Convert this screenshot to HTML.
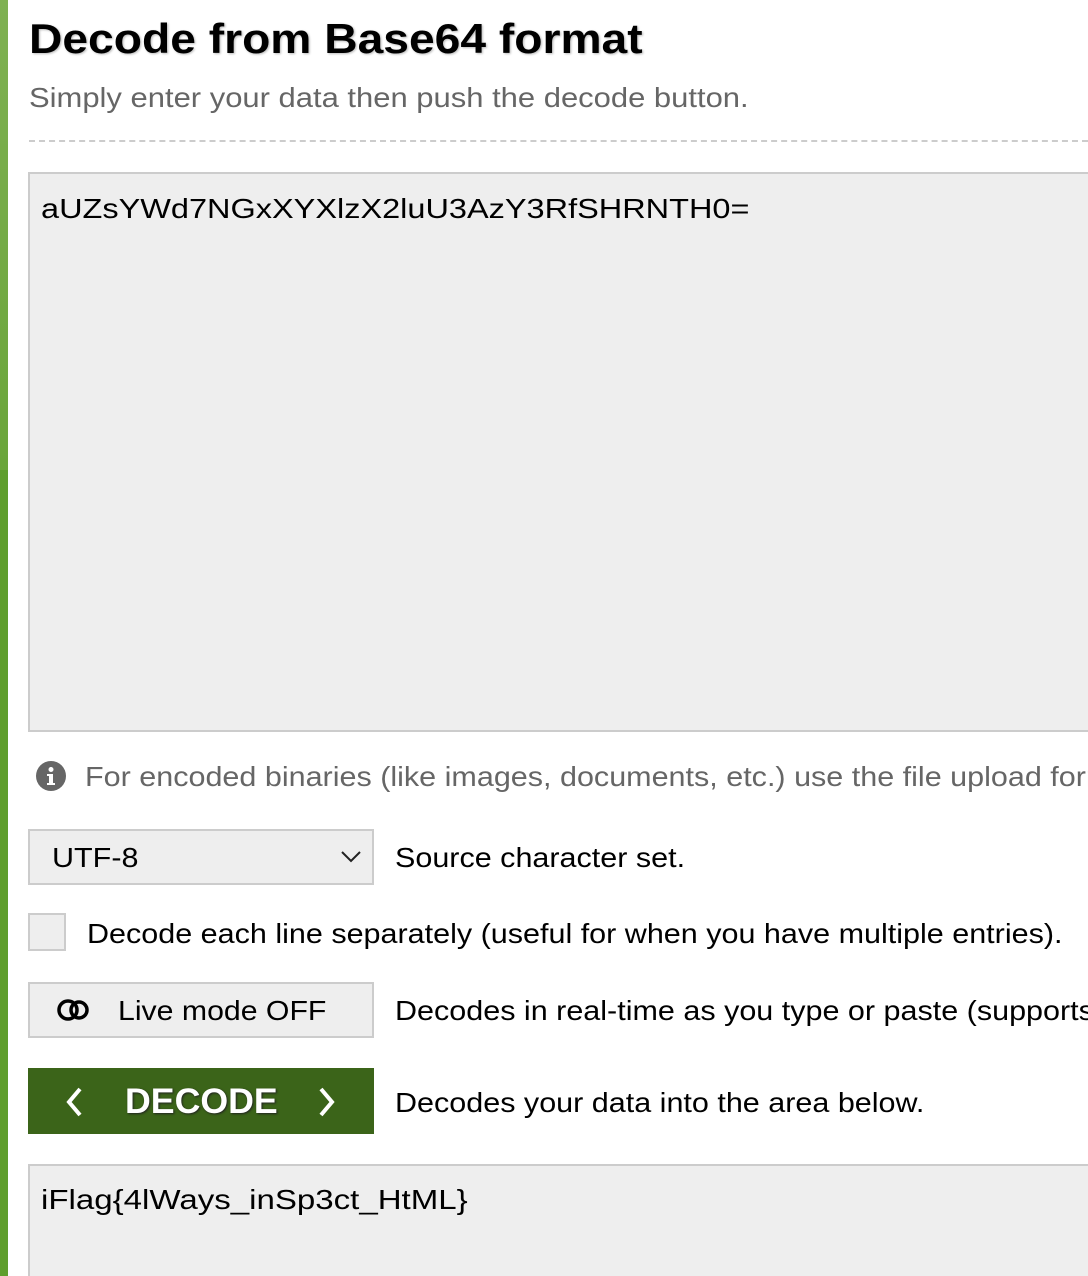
<!DOCTYPE html>
<html style="overflow:hidden"><head><style>
body{margin:0;width:1088px;height:1276px;overflow:hidden;background:#fff;font-family:"Liberation Sans",Arial,sans-serif;position:relative}
.bar{position:absolute;left:0;top:0;width:8px;height:1276px;background:#5f9e2d}
.bar2{position:absolute;left:0;top:0;width:8px;height:470px;background:linear-gradient(#7fb152,#6aa53a)}
.a{position:absolute;white-space:nowrap;transform-origin:0 0}
h1{position:absolute;left:29px;top:15px;margin:0;font-size:42px;font-weight:bold;color:#000;text-shadow:1px 1px 2px #bbb;transform:scaleX(1.10);transform-origin:0 0;white-space:nowrap}
.box{position:absolute;background:#eee;border:2px solid #ccc;box-sizing:border-box}
.s{transform:scaleX(1.09)}
</style></head><body>
<div class="bar"></div><div class="bar2"></div>
<h1>Decode from Base64 format</h1>
<div class="a" style="left:29px;top:82px;font-size:28px;color:#666;transform:scaleX(1.106)">Simply enter your data then push the decode button.</div>
<div class="a" style="left:29px;top:140px;width:1059px;border-top:2px dashed #ccc"></div>
<div class="box" style="left:28px;top:172px;width:1062px;height:560px"></div>
<div class="a" style="left:41px;top:193px;font-size:28px;color:#000;transform:scaleX(1.16)">aUZsYWd7NGxXYXlzX2luU3AzY3RfSHRNTH0=</div>
<svg class="a" style="left:36px;top:761px" width="30" height="30" viewBox="0 0 30 30"><circle cx="15" cy="15" r="15" fill="#666"/><circle cx="15" cy="8.5" r="2.5" fill="#fff"/><path d="M11 13h6v9h2v2h-8v-2h2v-7h-2z" fill="#fff"/></svg>
<div class="a s" style="left:85px;top:761px;font-size:28px;color:#666">For encoded binaries (like images, documents, etc.) use the file upload form</div>
<div class="box" style="left:28px;top:829px;width:346px;height:56px"></div>
<div class="a s" style="left:52px;top:842px;font-size:28px;color:#000">UTF-8</div>
<svg class="a" style="left:340px;top:849px" width="22" height="14"><path d="M2 3l9 9 9-9" fill="none" stroke="#222" stroke-width="2"/></svg>
<div class="a s" style="left:395px;top:842px;font-size:28px;color:#000">Source character set.</div>
<div class="box" style="left:28px;top:913px;width:38px;height:38px"></div>
<div class="a s" style="left:87px;top:918px;font-size:28px;color:#000">Decode each line separately (useful for when you have multiple entries).</div>
<div class="box" style="left:28px;top:982px;width:346px;height:56px"></div>
<svg class="a" style="left:56px;top:998px" width="36" height="24"><circle cx="12" cy="12" r="9" fill="none" stroke="#000" stroke-width="3.5"/><circle cx="23" cy="12" r="8" fill="none" stroke="#000" stroke-width="3.5"/></svg>
<div class="a" style="left:118px;top:995px;font-size:28px;color:#000;transform:scaleX(1.08)">Live mode OFF</div>
<div class="a s" style="left:395px;top:995px;font-size:28px;color:#000">Decodes in real-time as you type or paste (supports</div>
<div class="a" style="left:28px;top:1068px;width:346px;height:66px;background:#3b6419"></div>
<svg class="a" style="left:62px;top:1086px" width="300" height="32"><path d="M18 3L7 16l11 13" fill="none" stroke="#fff" stroke-width="4"/><path d="M259 3l11 13-11 13" fill="none" stroke="#fff" stroke-width="4"/></svg>
<div class="a" style="left:125px;top:1082px;font-size:35px;font-weight:bold;color:#fff;text-shadow:1px 1px 2px #222;transform:scaleX(1.02)">DECODE</div>
<div class="a s" style="left:395px;top:1087px;font-size:28px;color:#000">Decodes your data into the area below.</div>
<div class="box" style="left:28px;top:1164px;width:1062px;height:112px;border-bottom:none"></div>
<div class="a" style="left:41px;top:1184px;font-size:28px;color:#000;transform:scaleX(1.18)">iFlag{4lWays_inSp3ct_HtML}</div>
</body></html>
